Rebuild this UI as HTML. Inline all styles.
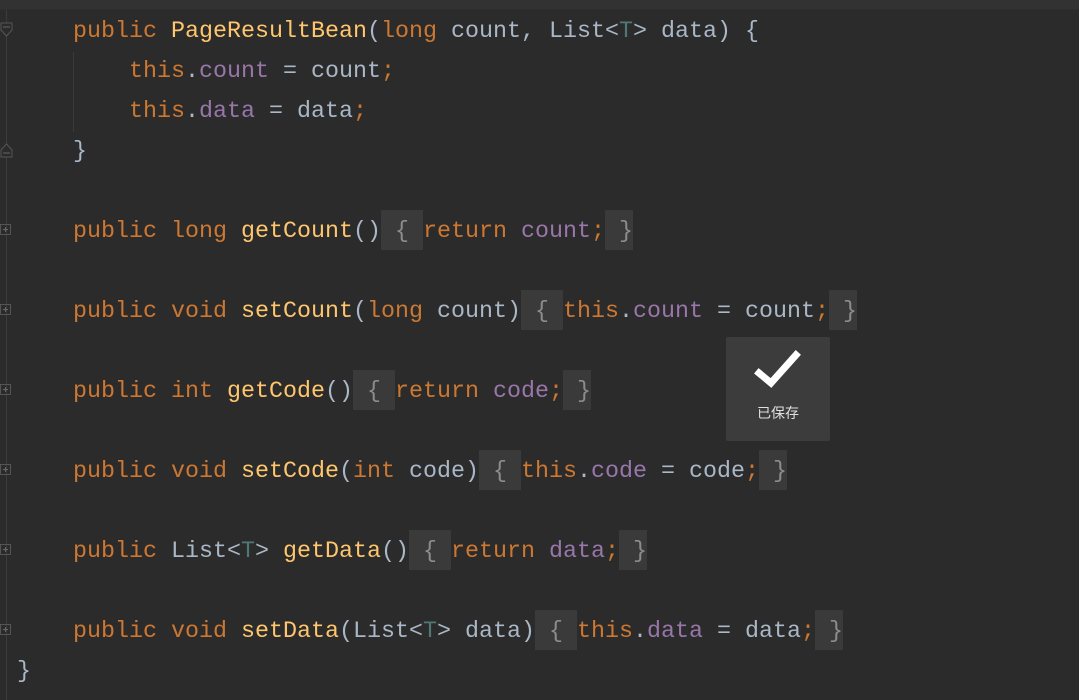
<!DOCTYPE html>
<html><head><meta charset="utf-8"><style>
html,body{margin:0;padding:0}
body{width:1079px;height:700px;background:#2b2b2b;position:relative;overflow:hidden;font-family:"Liberation Mono",monospace;font-size:23.33px;color:#a9b7c6}
.top{position:absolute;left:0;top:0;width:1079px;height:9px;background:#323232;border-bottom:1px solid #2e2e2e}
.gl{position:absolute;left:6px;top:10px;width:1px;height:690px;background:#3c3c3c}
.ln{position:absolute;left:17px;height:44px;line-height:44px;white-space:pre}
.k{color:#cc7832}.m{color:#ffc66d}.f{color:#9876aa}.t{color:#507874}.b{color:#a9b7c6}
.fb{background:linear-gradient(#3a3a3a,#3a3a3a) 0 0/100% 40px no-repeat;color:#8c8c8c;display:inline-block;height:44px;vertical-align:top}
.pl{position:absolute;left:0;width:11px;height:11px;border:1px solid #555;box-sizing:border-box}
.pl:before{content:"";position:absolute;left:2px;top:4px;width:5px;height:1px;background:#666}
.pl:after{content:"";position:absolute;left:4px;top:2px;width:1px;height:5px;background:#666}
.ind{position:absolute;left:73px;top:52px;width:1px;height:80px;background:#3a3a3a}
.toast{position:absolute;left:726px;top:337px;width:104px;height:104px;background:#3c3c3c;border-radius:2px}
.toast span{position:absolute;left:0;width:104px;top:66px;text-align:center;font-family:"Liberation Sans","Noto Sans CJK SC",sans-serif;font-size:14px;color:#e0e0e0}
</style></head><body>
<div class="top"></div>
<div class="gl"></div>
<div class="ind"></div>
<svg style="position:absolute;left:0;top:22px" width="13" height="20"><path d="M1 1H12V8L6.5 14L1 8Z" fill="#2b2b2b" stroke="#555"/><path d="M3 5H10" stroke="#666"/></svg>
<svg style="position:absolute;left:0;top:138px" width="13" height="20"><path d="M1 19H12V12L6.5 6L1 12Z" fill="#2b2b2b" stroke="#555"/><path d="M3 15H10" stroke="#666"/></svg>
<div class="pl" style="top:224px"></div>
<div class="pl" style="top:304px"></div>
<div class="pl" style="top:384px"></div>
<div class="pl" style="top:464px"></div>
<div class="pl" style="top:544px"></div>
<div class="pl" style="top:624px"></div>

<div class="ln" style="top:10px">    <span class="k">public </span><span class="m">PageResultBean</span>(<span class="k">long </span>count, List&lt;<span class="t">T</span>&gt; data) {</div>
<div class="ln" style="top:50px">        <span class="k">this</span>.<span class="f">count</span> = count<span class="k">;</span></div>
<div class="ln" style="top:90px">        <span class="k">this</span>.<span class="f">data</span> = data<span class="k">;</span></div>
<div class="ln" style="top:130px">    }</div>
<div class="ln" style="top:210px">    <span class="k">public long </span><span class="m">getCount</span>()<span class="fb"> { </span><span class="k">return </span><span class="f">count</span><span class="k">;</span><span class="fb"> }</span></div>
<div class="ln" style="top:290px">    <span class="k">public void </span><span class="m">setCount</span>(<span class="k">long </span>count)<span class="fb"> { </span><span class="k">this</span>.<span class="f">count</span> = count<span class="k">;</span><span class="fb"> }</span></div>
<div class="ln" style="top:370px">    <span class="k">public int </span><span class="m">getCode</span>()<span class="fb"> { </span><span class="k">return </span><span class="f">code</span><span class="k">;</span><span class="fb"> }</span></div>
<div class="ln" style="top:450px">    <span class="k">public void </span><span class="m">setCode</span>(<span class="k">int </span>code)<span class="fb"> { </span><span class="k">this</span>.<span class="f">code</span> = code<span class="k">;</span><span class="fb"> }</span></div>
<div class="ln" style="top:530px">    <span class="k">public </span>List&lt;<span class="t">T</span>&gt; <span class="m">getData</span>()<span class="fb"> { </span><span class="k">return </span><span class="f">data</span><span class="k">;</span><span class="fb"> }</span></div>
<div class="ln" style="top:610px">    <span class="k">public void </span><span class="m">setData</span>(List&lt;<span class="t">T</span>&gt; data)<span class="fb"> { </span><span class="k">this</span>.<span class="f">data</span> = data<span class="k">;</span><span class="fb"> }</span></div>
<div class="ln" style="top:650px">}</div>

<div class="toast">
<svg style="position:absolute;left:0;top:0" width="104" height="60"><path d="M33 36L45 46L70 18" fill="none" stroke="#fff" stroke-width="7" stroke-linecap="square"/></svg>
<span>已保存</span>
</div>
</body></html>
